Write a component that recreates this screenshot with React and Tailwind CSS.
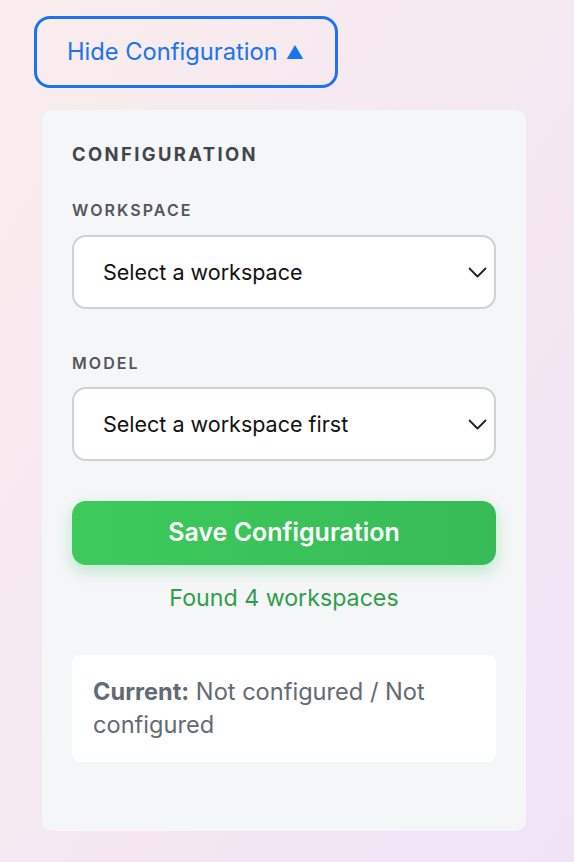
const fieldLabel = "text-[16px] leading-[20px] font-semibold tracking-[0.13em] text-[#52565c] uppercase";

const Chevron = () => (
  <svg width="19" height="11" viewBox="0 0 19 11" fill="none" className="text-[#222]">
    <polyline points="1.5,1.5 9.5,9.5 17.5,1.5" stroke="currentColor" strokeWidth="1.8" strokeLinecap="round" strokeLinejoin="round" />
  </svg>
);

const SelectBox = ({ value }) => (
  <div className="flex items-center justify-between h-[74px] rounded-[14px] border-2 border-[#cfd1d4] bg-white pl-[29px] pr-[7px]">
    <span className="text-[21.5px] text-[#111]">{value}</span>
    <Chevron />
  </div>
);

export default function App() {
  return (
    <div
      className="min-h-[862px] w-full bg-gradient-to-br from-[#f9eded] to-[#f0e3f6] px-[34px] pt-[16px] pb-[32px]"
      style={{ fontFamily: "Inter, 'Noto Sans', sans-serif" }}
    >
      <button className="flex items-center gap-[8px] h-[72px] rounded-[16px] border-[3px] border-[#1a73f0] pl-[30px] pr-[31px] text-[23.7px] text-[#1a73f0]">
        <span>Hide Configuration</span>
        <span className="text-[18px]">▲</span>
      </button>

      <div className="mt-[22px] ml-[8px] w-[484px] rounded-[10px] bg-[#f5f6f8] px-[30px] pt-[32px] pb-[69px]">
        <h2 className="text-[18.4px] leading-[24px] font-bold tracking-[0.13em] text-[#41454b]">CONFIGURATION</h2>

        <div className="mt-[34px]">
          <p className={fieldLabel}>Workspace</p>
          <div className="mt-[15px]">
            <SelectBox value="Select a workspace" />
          </div>
        </div>

        <div className="mt-[44px]">
          <p className={fieldLabel}>Model</p>
          <div className="mt-[14px]">
            <SelectBox value="Select a workspace first" />
          </div>
        </div>

        <button className="mt-[40px] w-full h-[64px] rounded-[14px] bg-gradient-to-r from-[#3dca5b] to-[#37bb57] text-white text-[25px] font-semibold shadow-[0_6px_16px_rgba(52,199,89,0.3)]">
          Save Configuration
        </button>

        <p className="mt-[18px] text-center text-[23.2px] leading-[30px] text-[#2f9e4b]">Found 4 workspaces</p>

        <div className="mt-[42px] rounded-[8px] bg-white px-[21px] pt-[20px] pb-[21px] text-[23.6px] leading-[33px] text-[#626a73]">
          <span className="font-bold">Current:</span> Not configured / Not configured
        </div>
      </div>
    </div>
  );
}
